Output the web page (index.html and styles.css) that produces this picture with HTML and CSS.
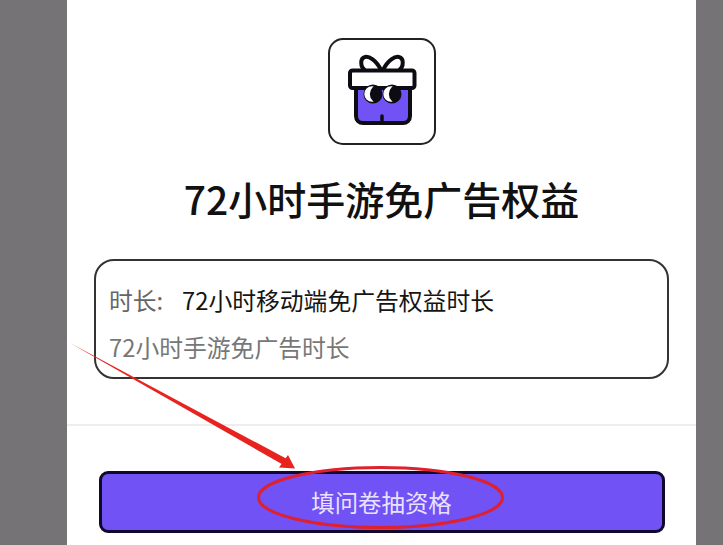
FILE: index.html
```html
<!DOCTYPE html>
<html lang="zh-CN">
	<head>
		<meta charset="utf-8"/>
		<title>72小时手游免广告权益</title>
		<link rel="stylesheet" href="styles.css">
	</head>
	<body>
		<div class="panel">
			<div class="iconBox">
				<svg class="gift" viewBox="20 20 104 103">
					<g fill="none" stroke="#0d0c12" stroke-width="4" stroke-linejoin="round">
						<path d="M71 50 C66 40 59 36 55 37 C50 38 50 47 55 50"/>
						<path d="M73 50 C78 40 85 36 89 37 C94 38 94 47 89 50"/>
					</g>
					<path d="M46 66 H100 V96 C100 100 97 103 93 103 H53 C49 103 46 100 46 96 Z" fill="#7152f5" stroke="#0d0c12" stroke-width="4" stroke-linejoin="round"/>
					<rect x="40" y="50.5" width="64.5" height="17.5" rx="2.5" fill="#fff" stroke="#0d0c12" stroke-width="4"/>
					<path d="M72 102 V96" stroke="#0d0c12" stroke-width="3.5" stroke-linecap="round"/>
					<circle cx="63" cy="74" r="9.5" fill="#0d0c12"/>
					<circle cx="82" cy="74" r="9.5" fill="#0d0c12"/>
					<path d="M62 67 A7 7 0 0 0 62 81 A10 10 0 0 1 62 67 Z" fill="#fff" stroke="#fff" stroke-width="1.4"/>
					<path d="M81 67 A7 7 0 0 0 81 81 A10 10 0 0 1 81 67 Z" fill="#fff" stroke="#fff" stroke-width="1.4"/>
				</svg>
			</div>
			<h1 class="title">72小时手游免广告权益</h1>
			<div class="info">
				<div class="infoRow"><span class="label">时长:</span><span class="value">72小时移动端免广告权益时长</span></div>
				<div class="infoNote">72小时手游免广告时长</div>
			</div>
			<hr class="divider"/>
			<button class="action">填问卷抽资格</button>
		</div>
		<svg class="marks" viewBox="0 0 723 545">
			<polygon points="70,343 287,459 283.5,465" fill="#e8231f"/>
			<polygon points="295,468.5 279,467.5 288,455" fill="#e8231f"/>
			<ellipse cx="380.5" cy="497.5" rx="122" ry="30" fill="none" stroke="#e0202c" stroke-width="3"/>
		</svg>
	</body>
</html>
```

FILE: styles.css
```css
html, body{
	height: 100%;
}

body{
	font-family: "Noto Sans CJK SC", "Noto Sans", sans-serif;
	color: #111;
	margin: 0;
	padding: 0 0 0 67px;
	background: #757376;
	overflow: hidden;
	position: relative;
	box-sizing: border-box;
}

.panel{
	width: 629px;
	height: 545px;
	background: #fff;
	padding-top: 38px;
	box-sizing: border-box;
	display: flex;
	flex-direction: column;
	align-items: center;
}

.iconBox{
	width: 108px;
	height: 107px;
	border: 2px solid #222;
	border-radius: 15px;
	box-sizing: border-box;
}

.gift{
	display: block;
	width: 104px;
	height: 103px;
}

.title{
	font-size: 39px;
	font-weight: 500;
	line-height: 56px;
	margin: 25px 0 33px;
	color: #111;
}

.info{
	width: 575px;
	height: 120px;
	align-self: flex-start;
	margin-left: 27px;
	border: 2px solid #333;
	border-radius: 20px;
	box-sizing: border-box;
	padding: 8px 13px 0;
	display: flex;
	flex-direction: column;
	justify-content: center;
	gap: 13px;
	font-size: 23.8px;
	line-height: 34px;
}

.infoRow{
	display: flex;
}

.label{
	width: 73px;
	color: #666;
}

.value{
	color: #151515;
}

.infoNote{
	color: #777;
}

.divider{
	width: 100%;
	height: 2px;
	margin: 45px 0 0;
	border: none;
	background: #eeeeee;
}

.action{
	width: 566px;
	height: 62px;
	margin-top: 45px;
	border: 3px solid #12082e;
	border-radius: 9px;
	background: #7152f5;
	color: #e9e3ff;
	font-family: inherit;
	font-size: 23.4px;
	padding: 0;
}

.marks{
	position: absolute;
	top: 0;
	left: 0;
	width: 723px;
	height: 545px;
}
```
